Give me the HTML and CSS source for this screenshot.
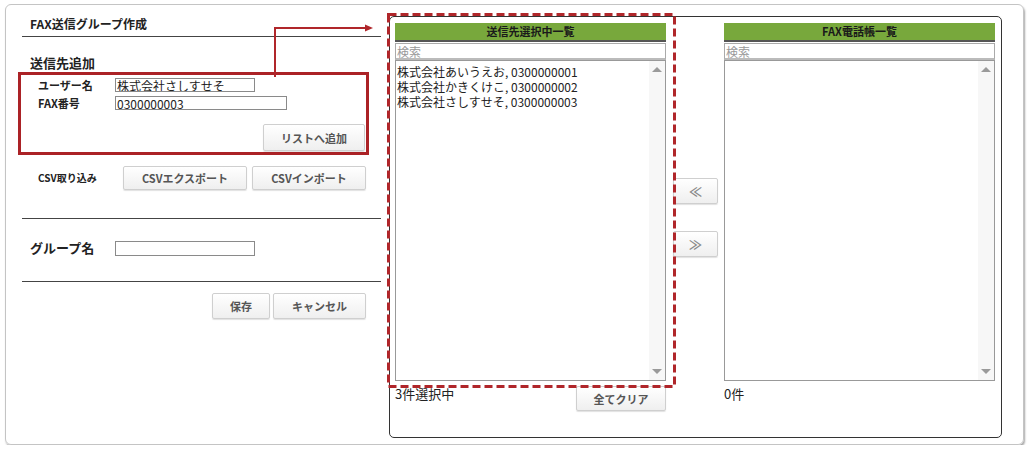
FILE: index.html
```html
<!DOCTYPE html>
<html lang="ja">
<head>
  <meta charset="UTF-8">
  <title>FAX送信グループ作成</title>
  <link rel="stylesheet" href="styles.css">
</head>
<body>

<div class="frame">

  <div class="left-col">
    <div class="page-title">FAX送信グループ作成</div>

    <div class="section-title">送信先追加</div>
    <div class="add-box">
      <div class="form-row">
        <label class="row-label">ユーザー名</label>
        <input type="text" class="text-input short" value="株式会社さしすせそ">
      </div>
      <div class="form-row second">
        <label class="row-label">FAX番号</label>
        <input type="text" class="text-input long" value="0300000003">
      </div>
      <div class="add-actions">
        <button class="btn btn-add">リストへ追加</button>
      </div>
    </div>

    <div class="csv-row">
      <span class="csv-label">CSV取り込み</span>
      <button class="btn btn-export">CSVエクスポート</button>
      <button class="btn btn-import">CSVインポート</button>
    </div>

    <hr class="rule rule-1">

    <div class="group-row">
      <span class="group-label">グループ名</span>
      <input type="text" class="text-input short">
    </div>

    <hr class="rule rule-2">

    <div class="save-row">
      <button class="btn btn-save">保存</button>
      <button class="btn btn-cancel">キャンセル</button>
    </div>
  </div>

  <div class="right-panel">
    <div class="list-panel">
      <div class="list-head">送信先選択中一覧</div>
      <input type="text" class="search" placeholder="検索">
      <div class="list-box">
        <ul class="list-items">
          <li>株式会社あいうえお, 0300000001</li>
          <li>株式会社かきくけこ, 0300000002</li>
          <li>株式会社さしすせそ, 0300000003</li>
        </ul>
        <div class="scroll-track">
          <span class="tri-up"></span>
          <span class="tri-down"></span>
        </div>
      </div>
      <div class="list-foot">
        <span class="count">3件選択中</span>
        <button class="btn btn-clear">全てクリア</button>
      </div>
    </div>

    <div class="move-col">
      <button class="btn btn-move btn-left">≪</button>
      <button class="btn btn-move btn-right">≫</button>
    </div>

    <div class="list-panel">
      <div class="list-head">FAX電話帳一覧</div>
      <input type="text" class="search" placeholder="検索">
      <div class="list-box">
        <ul class="list-items"></ul>
        <div class="scroll-track">
          <span class="tri-up"></span>
          <span class="tri-down"></span>
        </div>
      </div>
      <div class="list-foot">
        <span class="count">0件</span>
      </div>
    </div>

    <!-- highlight around the selected list -->
    <svg class="dash-mark" width="289" height="375" viewBox="0 0 289 375">
      <rect x="1.5" y="1.5" width="286" height="372" fill="none" stroke="#b0262a" stroke-width="3" stroke-dasharray="8 4"/>
    </svg>
  </div>

  <!-- arrow from the add box to the selected list -->
  <svg class="arrow" width="112" height="54" viewBox="0 0 112 54">
    <polyline points="5,54 5,5 96,5" fill="none" stroke="#b0262a" stroke-width="2"/>
    <polygon points="95,1.5 103,5 95,8.5" fill="#b0262a"/>
  </svg>

</div>

</body>
</html>
```

FILE: styles.css
```css
body {
  margin: 0;
  padding: 0;
  background-color: #fff;
  font-family: "Noto Sans CJK JP", "Noto Sans", sans-serif;
  color: #222;
}

.frame {
  position: relative;
  box-sizing: border-box;
  width: 1019px;
  height: 441px;
  margin: 4px 0 0 5px;
  padding: 11px 21px 0 16px;
  border: 1px solid #c4c4c4;
  border-radius: 6px;
  box-shadow: 1px 2px 2px rgba(0, 0, 0, 0.35);
  display: flex;
  align-items: flex-start;
}

/* left column */
.left-col {
  width: 359px;
  margin-right: 8px;
  display: flex;
  flex-direction: column;
}

.page-title {
  font-size: 12px;
  font-weight: bold;
  line-height: 16px;
  padding: 0 0 4px 8px;
  border-bottom: 1px solid #444;
}

.section-title {
  font-size: 13px;
  font-weight: bold;
  line-height: 16px;
  margin-top: 18px;
  padding-left: 8px;
}

.add-box {
  box-sizing: border-box;
  width: 351px;
  height: 83px;
  margin: 1px 0 0 -4px;
  padding: 3px 0 0 17px;
  border: 3px solid #ab2226;
  display: flex;
  flex-direction: column;
}

.form-row {
  display: flex;
  align-items: center;
  height: 14px;
}

.form-row.second {
  margin-top: 4px;
}

.row-label {
  width: 77px;
  font-size: 11px;
  font-weight: bold;
  line-height: 14px;
}

.text-input {
  box-sizing: border-box;
  height: 14px;
  padding: 0 1px;
  border: 1px solid #8a8a8a;
  font-family: "Noto Sans CJK JP", sans-serif;
  font-size: 12px;
  line-height: 12px;
  color: #222;
  outline: none;
}

.text-input.short {
  width: 140px;
}

.text-input.long {
  width: 172px;
}

.add-actions {
  display: flex;
  justify-content: flex-end;
  margin-top: 14px;
  padding-right: 1px;
}

.btn {
  box-sizing: border-box;
  background: linear-gradient(#ffffff, #efefef);
  border: 1px solid #cfcfcf;
  border-radius: 2px;
  box-shadow: 0 1px 1px rgba(0, 0, 0, 0.12);
  font-family: "Noto Sans CJK JP", sans-serif;
  font-size: 11px;
  font-weight: bold;
  color: #555;
  padding: 0;
  line-height: 14px;
  cursor: pointer;
}

.btn-add {
  width: 102px;
  height: 27px;
}

.csv-row {
  display: flex;
  align-items: center;
  margin-top: 11px;
}

.csv-label {
  width: 101px;
  padding-left: 16px;
  box-sizing: border-box;
  font-size: 10px;
  font-weight: bold;
  line-height: 14px;
  margin-top: -1px;
}

.btn-export {
  width: 124px;
  height: 24px;
}

.btn-import {
  width: 114px;
  height: 24px;
  margin-left: 5px;
}

.rule {
  border: none;
  border-top: 1px solid #444;
  margin: 0;
}

.rule-1 {
  margin-top: 28px;
}

.rule-2 {
  margin-top: 25px;
}

.group-row {
  display: flex;
  align-items: center;
  margin-top: 21px;
}

.group-row .text-input {
  height: 15px;
}

.group-label {
  width: 93px;
  padding-left: 8px;
  box-sizing: border-box;
  font-size: 13px;
  font-weight: bold;
  line-height: 16px;
}

.save-row {
  display: flex;
  justify-content: flex-end;
  margin-top: 11px;
  padding-right: 15px;
}

.btn-save {
  width: 58px;
  height: 26px;
}

.btn-cancel {
  width: 93px;
  height: 26px;
  margin-left: 3px;
}

/* right panel */
.right-panel {
  position: relative;
  box-sizing: border-box;
  width: 613px;
  height: 422px;
  padding: 6px 6px 0 5px;
  border: 1px solid #333;
  border-radius: 5px;
  display: flex;
  align-items: flex-start;
}

.list-panel {
  width: 271px;
  display: flex;
  flex-direction: column;
}

.list-head {
  height: 19px;
  box-sizing: border-box;
  background-color: #78a83c;
  border-bottom: 2px solid #555;
  font-size: 11px;
  font-weight: bold;
  line-height: 17px;
  text-align: center;
  color: #1a1a1a;
}

.search {
  box-sizing: border-box;
  width: 271px;
  height: 17px;
  margin: 1px 0 0;
  padding: 0 1px;
  border: 1px solid #aaa;
  border-bottom: 2px solid #bbb;
  font-family: "Noto Sans CJK JP", sans-serif;
  font-size: 12px;
  line-height: 13px;
  outline: none;
}

.search::placeholder {
  color: #999;
}

.list-box {
  position: relative;
  box-sizing: border-box;
  height: 321px;
  border: 1px solid #999;
  display: flex;
}

.list-items {
  flex: 1;
  list-style: none;
  margin: 0;
  padding: 3px 0 0 1px;
  font-size: 12px;
  line-height: 15px;
  color: #222;
}

.scroll-track {
  position: relative;
  width: 16px;
  background-color: #f7f7f7;
}

.tri-up,
.tri-down {
  position: absolute;
  left: 3px;
  width: 0;
  height: 0;
  border-left: 5px solid transparent;
  border-right: 5px solid transparent;
}

.tri-up {
  top: 6px;
  border-bottom: 5px solid #9a9a9a;
}

.tri-down {
  bottom: 6px;
  border-top: 5px solid #9a9a9a;
}

.list-foot {
  display: flex;
  justify-content: space-between;
  align-items: flex-start;
  margin-top: 4px;
}

.count {
  font-size: 13px;
  line-height: 18px;
  color: #222;
}

.btn-clear {
  width: 90px;
  height: 25px;
  margin-top: 1px;
}

.move-col {
  width: 58px;
  padding: 155px 0 0 7px;
  box-sizing: border-box;
  display: flex;
  flex-direction: column;
}

.btn-move {
  width: 45px;
  height: 26px;
  font-size: 13px;
  font-weight: bold;
  color: #888;
}

.btn-right {
  margin-top: 27px;
}

.dash-mark {
  position: absolute;
  left: -3px;
  top: -4px;
  pointer-events: none;
}

.arrow {
  position: absolute;
  left: 264px;
  top: 18px;
}
```
